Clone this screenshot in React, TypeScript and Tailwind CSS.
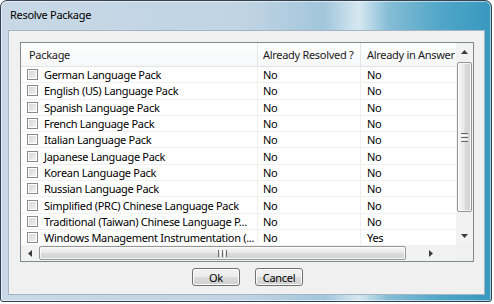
import React from 'react';

const ROWS: [string, string, string][] = [
  ['German Language Pack', 'No', 'No'],
  ['English (US) Language Pack', 'No', 'No'],
  ['Spanish Language Pack', 'No', 'No'],
  ['French Language Pack', 'No', 'No'],
  ['Italian Language Pack', 'No', 'No'],
  ['Japanese Language Pack', 'No', 'No'],
  ['Korean Language Pack', 'No', 'No'],
  ['Russian Language Pack', 'No', 'No'],
  ['Simplified (PRC) Chinese Language Pack', 'No', 'No'],
  ['Traditional (Taiwan) Chinese Language P...', 'No', 'No'],
  ['Windows Management Instrumentation (...', 'No', 'Yes'],
];

function Checkbox() {
  return (
    <div className="w-[11px] h-[11px] shrink-0 border border-[#8a8a8a] bg-[linear-gradient(135deg,#d2d2d2,#f6f6f6)] shadow-[inset_0_0_0_1px_#ffffff]" />
  );
}

function Button({ label }: { label: string }) {
  return (
    <div className="w-[48px] h-[18px] rounded-[3px] border border-[#707070] bg-[linear-gradient(#f3f3f3_0%,#ebebeb_50%,#dddddd_50%,#cfcfcf_100%)] shadow-[inset_0_0_0_1px_#fcfcfc] flex items-center justify-center text-black">
      {label}
    </div>
  );
}

export default function App() {
  return (
    <div className="w-[494px] h-[304px] bg-white font-['Noto_Sans',sans-serif] text-[11px] tracking-[-0.3px] leading-none">
      {/* window frame */}
      <div className="w-[492px] h-[302px] rounded-t-[7px] rounded-b-[3px] border border-[#34424f] bg-[linear-gradient(to_right,#c8d8e6_0%,#c0d4e3_50%,#a2c6db_66%,#d6e8f1_73%,#86bdd6_79%,#4fa6c8_90%,#3898be_100%)] shadow-[inset_0_0_0_1px_rgba(255,255,255,0.55)] flex flex-col">
        <div className="h-[29px] shrink-0 pl-[9px] pb-[3px] flex items-center text-black text-[11px]">Resolve Package</div>

        {/* client area */}
        <div className="ml-[7px] w-[477px] h-[265px] border border-[#a4b6c6] bg-[#f0f0f0] pt-[11px] pl-[11px] flex flex-col">
          {/* list view */}
          <div className="w-[454px] h-[220px] border border-[#828790] bg-white flex flex-col">
            <div className="flex h-[202px]">
              <div className="w-[435px] overflow-hidden">
                {/* header */}
                <div className="flex h-[24px] border-b border-[#e3e3e3] bg-[linear-gradient(#ffffff,#f6f7f8)] text-[#1a1a1a]">
                  <div className="w-[237px] shrink-0 pl-[8px] flex items-center border-r border-[#e5e5e5]">Package</div>
                  <div className="w-[103px] shrink-0 pl-[5px] flex items-center border-r border-[#e5e5e5]">Already Resolved ?</div>
                  <div className="w-[110px] shrink-0 pl-[6px] flex items-center whitespace-nowrap">Already in Answer</div>
                </div>
                {/* rows */}
                {ROWS.map(([name, resolved, answer]) => (
                  <div key={name} className="flex h-[16.3px] border-b border-[#f0f0f0] text-black">
                    <div className="w-[237px] shrink-0 pl-[6px] flex items-center gap-[6px] border-r border-[#f0f0f0] whitespace-nowrap overflow-hidden">
                      <Checkbox />
                      <span>{name}</span>
                    </div>
                    <div className="w-[103px] shrink-0 pl-[5px] flex items-center border-r border-[#f0f0f0]">{resolved}</div>
                    <div className="w-[95px] shrink-0 pl-[6px] flex items-center">{answer}</div>
                  </div>
                ))}
              </div>

              {/* vertical scrollbar */}
              <div className="w-[17px] bg-[#f2f2f2] flex flex-col items-center">
                <div className="h-[18px] w-full flex items-center justify-center">
                  <svg width="7" height="4" viewBox="0 0 7 4"><polygon points="0,4 3.5,0 7,4" fill="#3c3c3c" /></svg>
                </div>
                <div className="mt-[1px] w-[15px] h-[150px] rounded-[2px] border border-[#969696] bg-[linear-gradient(to_right,#f6f6f6,#e9e9e9_45%,#dadada_55%,#d2d2d2)] shadow-[inset_0_0_0_1px_rgba(255,255,255,0.8)] flex flex-col items-center justify-center gap-[1px]">
                  <div className="w-[7px] h-[1px] bg-[#6a6a6a]" />
                  <div className="w-[7px] h-[1px] bg-[#fbfbfb]" />
                  <div className="w-[7px] h-[1px] bg-[#6a6a6a]" />
                  <div className="w-[7px] h-[1px] bg-[#fbfbfb]" />
                  <div className="w-[7px] h-[1px] bg-[#6a6a6a]" />
                </div>
                <div className="flex-1" />
                <div className="h-[18px] w-full flex items-center justify-center">
                  <svg width="7" height="4" viewBox="0 0 7 4"><polygon points="0,0 3.5,4 7,0" fill="#3c3c3c" /></svg>
                </div>
              </div>
            </div>

            {/* horizontal scrollbar */}
            <div className="flex h-[16px] bg-[#f2f2f2]">
              <div className="w-[18px] h-full flex items-center justify-center">
                <svg width="4" height="7" viewBox="0 0 4 7"><polygon points="4,0 0,3.5 4,7" fill="#3c3c3c" /></svg>
              </div>
              <div className="mt-[1px] w-[367px] h-[14px] rounded-[2px] border border-[#969696] bg-[linear-gradient(#f6f6f6,#e9e9e9_45%,#dadada_55%,#d2d2d2)] shadow-[inset_0_0_0_1px_rgba(255,255,255,0.8)] flex items-center justify-center gap-[1px]">
                <div className="w-[1px] h-[7px] bg-[#6a6a6a]" />
                <div className="w-[1px] h-[7px] bg-[#fbfbfb]" />
                <div className="w-[1px] h-[7px] bg-[#6a6a6a]" />
                <div className="w-[1px] h-[7px] bg-[#fbfbfb]" />
                <div className="w-[1px] h-[7px] bg-[#6a6a6a]" />
              </div>
              <div className="flex-1 flex items-center justify-center">
                <svg width="4" height="7" viewBox="0 0 4 7"><polygon points="0,0 4,3.5 0,7" fill="#3c3c3c" /></svg>
              </div>
              <div className="w-[17px] h-full bg-[#f0f0f0]" />
            </div>
          </div>

          {/* buttons */}
          <div className="mt-[6px] flex justify-center gap-[15px] pl-[2px] pr-[11px]">
            <Button label="Ok" />
            <Button label="Cancel" />
          </div>
        </div>
      </div>
    </div>
  );
}
